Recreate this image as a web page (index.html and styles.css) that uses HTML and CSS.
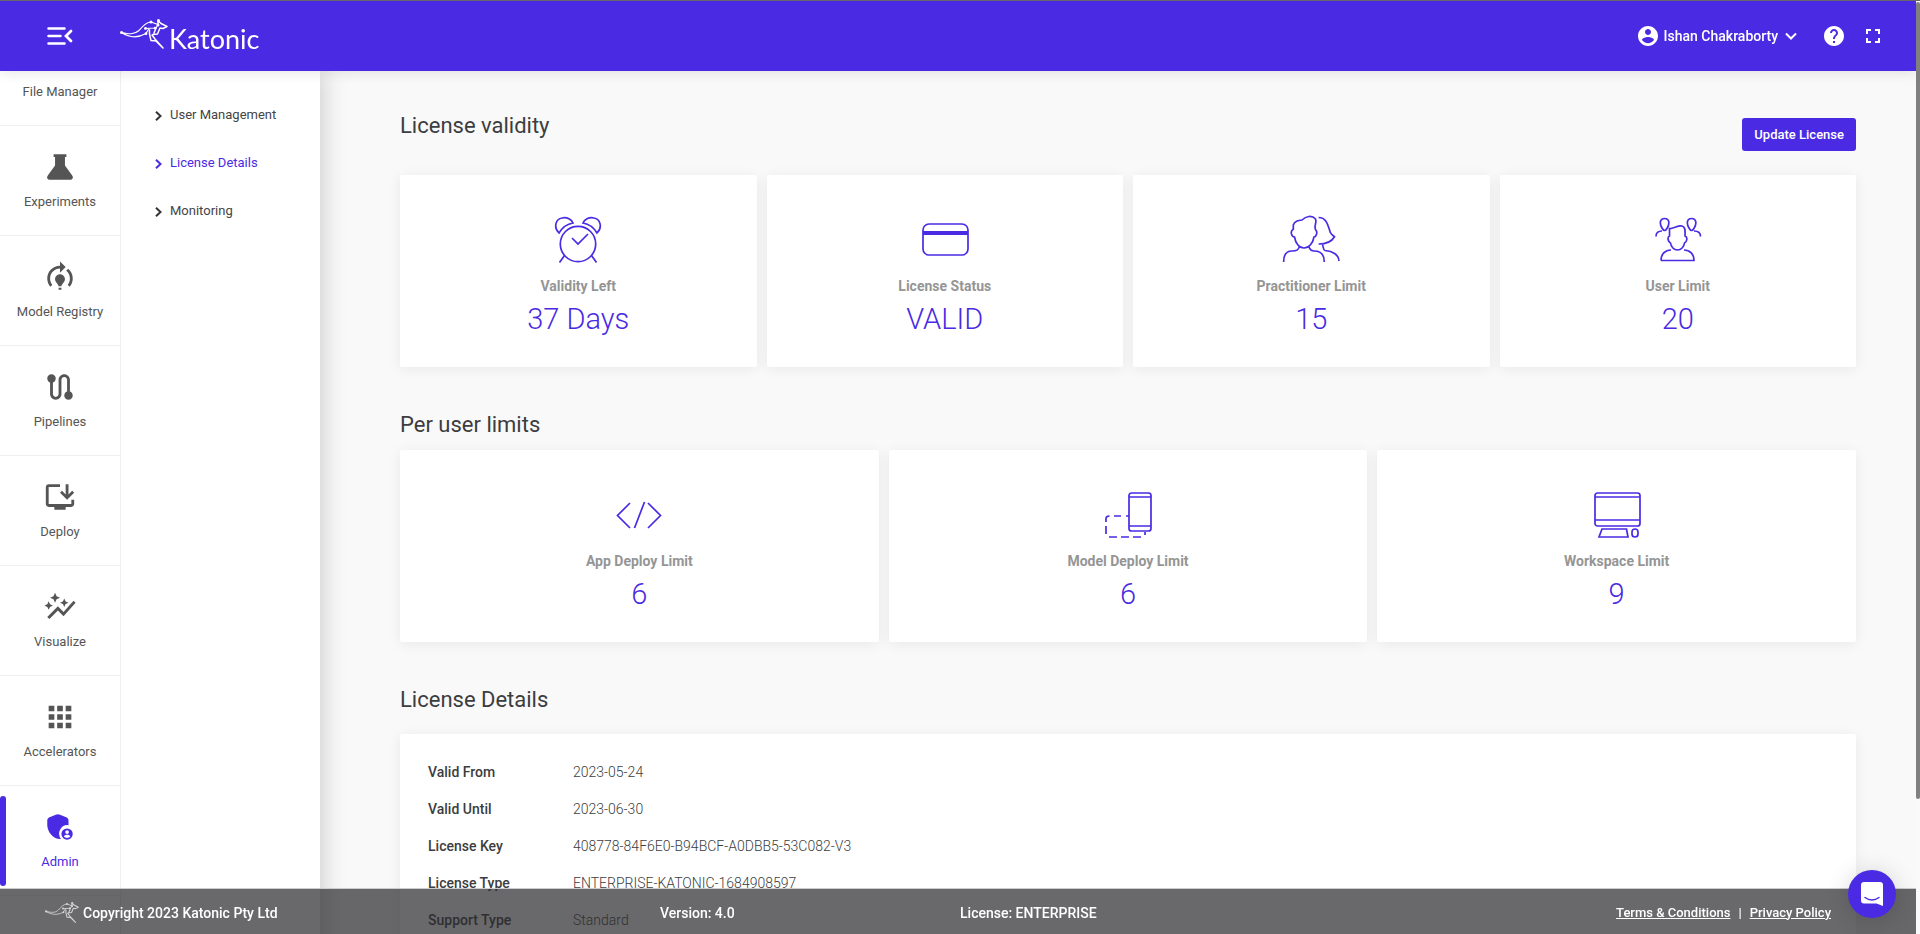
FILE: index.html
```html
<!DOCTYPE html>
<html lang="en">
<head>
<meta charset="utf-8">
<title>Katonic - License Details</title>
<link rel="stylesheet" href="styles.css">
</head>
<body>
<svg class="defs" aria-hidden="true">
  <symbol id="roo" viewBox="0 0 48 32">
    <g fill="none" stroke="currentColor" stroke-width="1.200" stroke-linecap="round" stroke-linejoin="round">
      <path d="M1.500 14.500C9 16 14 17 19 12.500C23 8 26 4.500 31 4L38 6.500M1.500 14.500C9 19.500 18 20 26 15.500L29 10.500M25 10.500L36 10L38 6.500"/>
      <path d="M38 2.500L41 5.500L47 8.500L43 10.500L40 10L37.500 16L33 16.500M38 2.500L38 6.500M29.500 12V16L31 22.500L36 23L43 30M32 17L35 21L43 30M36 10L34 15" stroke-width="1.500"/>
    </g>
    <g fill="currentColor"><circle cx="1.600" cy="14.500" r="1.600"/><circle cx="31" cy="4" r="1.500"/><circle cx="38.500" cy="2.500" r="1.500"/><circle cx="38" cy="7" r="1.500"/><circle cx="25.500" cy="10.500" r="1.400"/><circle cx="26" cy="15.700" r="1.400"/><circle cx="35" cy="10" r="1.300"/></g>
  </symbol>
</svg>

<header class="topbar">
  <button class="icon-btn menu-btn" aria-label="Collapse menu">
    <svg width="26" height="18" viewBox="0 0 26 18" fill="none" stroke="currentColor" stroke-width="2.500" stroke-linecap="round"><path d="M1.500 1.500h16M1.500 9h12M1.500 16.500h16"/><path d="M24 4l-5 5 5 5" stroke-width="2.800"/></svg>
  </button>
  <a class="brand" href="#"><svg class="brand-roo" width="48" height="32"><use href="#roo"/></svg><span class="brand-name">Katonic</span></a>
  <div class="topbar-right">
    <button class="icon-btn user-btn">
      <svg width="24" height="24" viewBox="0 0 24 24" fill="currentColor"><path d="M12 2C6.480 2 2 6.480 2 12s4.480 10 10 10 10-4.480 10-10S17.520 2 12 2zm0 3c1.660 0 3 1.340 3 3s-1.340 3-3 3-3-1.340-3-3 1.340-3 3-3zm0 14.200c-2.500 0-4.710-1.280-6-3.220.03-1.990 4-3.080 6-3.080 1.990 0 5.970 1.090 6 3.080-1.290 1.940-3.500 3.220-6 3.220z"/></svg>
      <span>Ishan Chakraborty</span>
      <svg width="12" height="8" viewBox="0 0 12 8" fill="none" stroke="currentColor" stroke-width="2"><path d="M1 1.500l5 5 5-5"/></svg>
    </button>
    <button class="icon-btn" aria-label="Help"><svg width="24" height="24" viewBox="0 0 24 24" fill="currentColor"><path d="M12 2C6.480 2 2 6.480 2 12s4.480 10 10 10 10-4.480 10-10S17.520 2 12 2zm1 17h-2v-2h2v2zm2.070-7.750l-.9.920C13.450 12.900 13 13.500 13 15h-2v-.5c0-1.100.45-2.100 1.170-2.830l1.240-1.260c.37-.36.59-.86.59-1.410 0-1.100-.9-2-2-2s-2 .9-2 2H8c0-2.210 1.790-4 4-4s4 1.790 4 4c0 .88-.36 1.680-.93 2.250z"/></svg></button>
    <button class="icon-btn" aria-label="Full screen"><svg width="24" height="24" viewBox="0 0 24 24" fill="currentColor"><path d="M7 14H5v5h5v-2H7v-3zm-2-4h2V7h3V5H5v5zm12 7h-3v2h5v-5h-2v3zM14 5v2h3v3h2V5h-5z"/></svg></button>
  </div>
</header>

<div class="shell">
  <nav class="sidebar" aria-label="Main">
    <a class="side-item side-item-cut" href="#">File Manager</a>
    <a class="side-item" href="#"><svg class="side-icon" viewBox="0 0 24 24"><path d="M7.500 3h9v2H15.500v6l5 6.800c1.300 1.800.3 3.200-1.500 3.200H5c-1.800 0-2.800-1.400-1.500-3.200l5-6.800V5H7.500z"/></svg>Experiments</a>
    <a class="side-item" href="#"><svg class="side-icon" viewBox="0 0 24 24"><path d="M15.500 13.500c0 2-2.500 3.500-2.500 5h-2c0-1.500-2.500-3-2.500-5 0-1.930 1.570-3.500 3.500-3.500s3.500 1.570 3.500 3.500zm-2.500 6h-2V21h2v-1.500zm6-6.500c0 1.680-.59 3.210-1.580 4.420l1.420 1.420C20.180 17.270 21 15.230 21 13c0-2.740-1.230-5.190-3.160-6.840l-1.420 1.420C17.990 8.860 19 10.820 19 13zm-3-8l-4-4v3c-4.970 0-9 4.030-9 9 0 2.230.82 4.270 2.160 5.840l1.420-1.420C5.590 16.210 5 14.680 5 13c0-3.860 3.140-7 7-7v3l4-4z"/></svg>Model Registry</a>
    <a class="side-item" href="#"><svg class="side-icon" viewBox="0 0 24 24"><path d="M19 15.180V7c0-2.210-1.790-4-4-4s-4 1.790-4 4v10c0 1.100-.9 2-2 2s-2-.9-2-2V8.820C8.160 8.400 9 7.300 9 6c0-1.660-1.340-3-3-3S3 4.340 3 6c0 1.300.84 2.400 2 2.820V17c0 2.210 1.790 4 4 4s4-1.790 4-4V7c0-1.100.9-2 2-2s2 .9 2 2v8.180c-1.160.41-2 1.510-2 2.820 0 1.660 1.340 3 3 3s3-1.340 3-3c0-1.300-.84-2.400-2-2.820z"/></svg>Pipelines</a>
    <a class="side-item" href="#"><svg class="side-icon" viewBox="0 0 24 24"><path d="M20 17H4V5h8V3H4c-1.110 0-2 .89-2 2v12c0 1.100.89 2 2 2h4v2h8v-2h4c1.100 0 2-.9 2-2v-3h-2v3z"/><path d="M17 14l5-5-1.410-1.410L18 10.170V3h-2v7.170l-2.590-2.580L12 9l5 5z"/></svg>Deploy</a>
    <a class="side-item" href="#"><svg class="side-icon" viewBox="0 0 24 24"><path d="M14.060 9.940L12 9l2.060-.94L15 6l.94 2.060L18 9l-2.060.94L15 12l-.94-2.060zM4 14l.94-2.060L7 11l-2.060-.94L4 8l-.94 2.060L1 11l2.060.94L4 14zm4.500-5l1.090-2.410L12 5.500 9.590 4.410 8.500 2 7.410 4.410 5 5.500l2.410 1.090L8.500 9zm-4 11.500l6-6.010 4 4L23 8.930l-1.410-1.410-7.090 7.970-4-4L3 19l1.500 1.500z"/></svg>Visualize</a>
    <a class="side-item" href="#"><svg class="side-icon" viewBox="0 0 24 24"><path d="M4 8h4V4H4v4zm6 12h4v-4h-4v4zm-6 0h4v-4H4v4zm0-6h4v-4H4v4zm6 0h4v-4h-4v4zm6-10v4h4V4h-4zm-6 4h4V4h-4v4zm6 6h4v-4h-4v4zm0 6h4v-4h-4v4z"/></svg>Accelerators</a>
    <a class="side-item side-item-active" href="#" aria-current="page"><svg class="side-icon" viewBox="0 0 24 24"><path d="M9 3.300Q10.500 2.700 12 3.300L16.800 5.300Q18 6 18 7.300V10.700A6 6 0 0 0 12.700 20.400C7 20.800 3 15 3 10.500V7.300Q3 6 4.200 5.300Z"/><path fill-rule="evenodd" d="M17 13a4 4 0 1 0 0 8 4 4 0 0 0 0-8zm0 1.300a1.300 1.300 0 1 1 0 2.600 1.300 1.300 0 0 1 0-2.600zm-2.300 4.300c.6-1.500 4-1.500 4.600 0-1 1.500-3.600 1.500-4.600 0z"/></svg>Admin</a>
  </nav>

  <nav class="submenu" aria-label="Admin">
    <a class="sub-item" href="#"><svg class="chev" viewBox="0 0 7 10"><path d="M1 .8L5.500 5 1 9.200"/></svg>User Management</a>
    <a class="sub-item sub-item-active" href="#"><svg class="chev" viewBox="0 0 7 10"><path d="M1 .8L5.500 5 1 9.200"/></svg>License Details</a>
    <a class="sub-item" href="#"><svg class="chev" viewBox="0 0 7 10"><path d="M1 .8L5.500 5 1 9.200"/></svg>Monitoring</a>
  </nav>

  <main class="content">
    <div class="title-row">
      <h2 class="section-title">License validity</h2>
      <button class="update-btn">Update License</button>
    </div>
    <section class="cards cards-four">
      <article class="card">
        <svg class="card-icon" viewBox="0 -1 58 48"><circle cx="29" cy="28" r="17.700"/><path d="M23 22l6 6 10-10M15.500 39.500L10.500 46.500M42.500 39.500L47.500 46.500M10 17C4 11 7 3 13 2 18 .5 23 4 24 7 18 8 13 12 10 17zM48 17C54 11 51 3 45 2 40 .5 35 4 34 7 40 8 45 12 48 17z"/></svg>
        <h3 class="card-label">Validity Left</h3><p class="card-value">37 Days</p>
      </article>
      <article class="card">
        <svg class="card-icon" viewBox="0 0 58 48"><rect x="7" y="9" width="45" height="31" rx="6"/><path d="M7 18h45" stroke-width="4"/></svg>
        <h3 class="card-label">License Status</h3><p class="card-value">VALID</p>
      </article>
      <article class="card">
        <svg class="card-icon" viewBox="0 0 58 48"><path d="M1.600 47C1.600 40 4 36 10 36 15 36 16 35 17.300 32M27 32C28 34 28 36 32 36 39 36 42.300 40 42.300 47M22 33C17 33 13.500 28 12.500 22 9 21.500 8 16 11.300 14.300V10C12.500 6 16 5.500 20 5 24 1 30 0 33.500 4 35 8 32 10 33.400 14.300 36 17 34.500 21.500 32 22 31 28 27 33 22 33zM36.600 2.500C45 2.500 46 11 48.400 17.700 50 20.500 51.500 20.500 52.500 21.700 50 26 45 29 36.600 29M40.500 29.500C41.500 32 41 35 43 35.500 51 36 57 40 57 46"/></svg>
        <h3 class="card-label">Practitioner Limit</h3><p class="card-value">15</p>
      </article>
      <article class="card">
        <svg class="card-icon" viewBox="0 -1 58 48"><path d="M12 44.500C12 38 16 34 22 34M35 34C41 34 45 38 45 44.500H12M28.500 34C25 34 22 31 21.500 27 19 26 18 21 20.500 20V12.500C24 13 29 9 33 10 37 11 36 16 36 20 39 21 38 26 35.500 27 35 31 32 34 28.500 34zM15.600 2.500C10.500 2.500 10.500 8 13 12Q15.600 17 18.200 12C20.700 8 20.700 2.500 15.600 2.500zM42.600 2.500C37.500 2.500 37.500 8 40 12Q42.600 17 45.200 12C47.700 8 47.700 2.500 42.600 2.500zM13 15C9 15 7 17 7 20.500M45 15C49 15 51.500 17 51.500 20.500"/></svg>
        <h3 class="card-label">User Limit</h3><p class="card-value">20</p>
      </article>
    </section>

    <h2 class="section-title section-limits">Per user limits</h2>
    <section class="cards cards-three">
      <article class="card">
        <svg class="card-icon" viewBox="0 -1 58 48"><path d="M20 12L7.500 24.500 20 37M38 12L50.500 24.500 38 37M34.500 11L24.500 37"/></svg>
        <h3 class="card-label">App Deploy Limit</h3><p class="card-value">6</p>
      </article>
      <article class="card">
        <svg class="card-icon" viewBox="0 0 58 48"><rect x="30" y="3" width="22" height="38" rx="2.500"/><path d="M30 7h22M30 36h22M30 26H27M22 26H15M10.500 26Q7 26 7 28.500V32M7 36V44M10 47H18M22 47H30M34 47H42M46 42V45"/></svg>
        <h3 class="card-label">Model Deploy Limit</h3><p class="card-value">6</p>
      </article>
      <article class="card">
        <svg class="card-icon" viewBox="0 0 58 48"><rect x="7" y="3" width="45" height="33" rx="2.500"/><path d="M7 7h45M7 30h45M14 39H38.500L40 47H11z"/><rect x="44" y="39" width="6" height="8" rx="3"/></svg>
        <h3 class="card-label">Workspace Limit</h3><p class="card-value">9</p>
      </article>
    </section>

    <h2 class="section-title section-details">License Details</h2>
    <section class="details">
      <table>
        <tbody>
          <tr><th scope="row">Valid From</th><td>2023-05-24</td></tr>
          <tr><th scope="row">Valid Until</th><td>2023-06-30</td></tr>
          <tr><th scope="row">License Key</th><td>408778-84F6E0-B94BCF-A0DBB5-53C082-V3</td></tr>
          <tr><th scope="row">License Type</th><td>ENTERPRISE-KATONIC-1684908597</td></tr>
          <tr><th scope="row">Support Type</th><td>Standard</td></tr>
        </tbody>
      </table>
    </section>
  </main>
</div>

<footer class="footer">
  <div class="foot-copy"><svg class="foot-roo" width="34" height="23"><use href="#roo"/></svg>Copyright 2023 Katonic Pty Ltd</div>
  <div>Version: 4.0</div>
  <div>License: ENTERPRISE</div>
  <div class="foot-links"><a href="#">Terms &amp; Conditions</a><span>|</span><a href="#">Privacy Policy</a></div>
</footer>

<button class="chat" aria-label="Open chat"><svg width="22" height="24" viewBox="0 0 22 24"><path fill="#fff" d="M3 0H19Q22 0 22 3V24L15.500 21.500H3Q0 21.500 0 18.500V3Q0 0 3 0z"/><path d="M4 15.500Q11 20.500 18 15.500" fill="none" stroke="#4a2be3" stroke-width="1.500" stroke-linecap="round"/></svg></button>
<div class="scroll-track"><div class="scroll-thumb"></div></div>
</body>
</html>
```
FILE: styles.css
```css
:root { --brand: #4a2be3; --ink: #3c3d3f; }
* { box-sizing: border-box; }
body { margin: 0; height: 100vh; overflow: hidden; background: #f9f9f9; color: var(--ink); font: 14px/18px Roboto, "Liberation Sans", sans-serif; }
h2, h3, p { margin: 0; }
a { color: inherit; text-decoration: none; }
button { font: inherit; cursor: pointer; border: 0; }
.defs { position: absolute; width: 0; height: 0; }

.topbar { position: fixed; top: 0; left: 0; right: 4px; height: 71px; z-index: 5; display: flex; align-items: center; padding: 0 31px 0 47px; background: var(--brand); border-top: 1px solid #666; color: #fff; box-shadow: 0 2px 12px rgba(0, 0, 0, .1); }
.icon-btn { display: flex; align-items: center; padding: 0; background: none; color: #fff; }
.brand { display: flex; align-items: flex-start; margin-left: 47px; padding-top: 1px; }
.brand-name { font: 27px/32px Lato, sans-serif; margin-top: 5px; margin-left: 1px; }
.topbar-right { display: flex; align-items: center; gap: 15px; margin-left: auto; }
.user-btn { gap: 4px; font-weight: 500; margin-right: 10px; }
.user-btn svg:last-child { margin-left: 3px; }

.shell { display: grid; grid-template-columns: 121px 199px 1fr; height: 100%; padding: 71px 4px 0 0; }
.sidebar { background: #fff; border-right: 1px solid #efefef; z-index: 2; }
.side-item { position: relative; display: flex; flex-direction: column; align-items: center; gap: 9px; height: 110px; padding-top: 24px; border-bottom: 1px solid #efefef; color: #555; font-size: 13px; }
.side-item-cut { height: 55px; padding-top: 12px; }
.side-icon { width: 34px; height: 34px; fill: #555; }
.side-item-active { color: var(--brand); }
.side-item-active .side-icon { fill: var(--brand); }
.side-item-active::before { content: ""; position: absolute; left: 0; top: 10px; width: 6px; height: 90px; border-radius: 3px; background: var(--brand); }

.submenu { background: #fff; padding: 20px 0 0 34px; z-index: 1; box-shadow: 4px 0 22px rgba(0, 0, 0, .17); }
.sub-item { display: flex; align-items: center; gap: 8px; height: 48px; font-size: 13px; color: #444; }
.sub-item-active { color: var(--brand); }
.chev { width: 7px; height: 10px; margin-top: 2px; fill: none; stroke: #333; stroke-width: 2; }
.sub-item-active .chev { stroke: var(--brand); }

.content { padding: 41px 60px 0 80px; min-width: 0; }
.title-row { display: flex; justify-content: space-between; align-items: flex-start; height: 63px; }
.section-title { font-size: 22px; line-height: 28px; font-weight: 400; }
.update-btn { margin-top: 6px; height: 33px; padding: 0 12px; border-radius: 3px; background: var(--brand); color: #fff; font-size: 13px; font-weight: 500; }
.cards { display: grid; gap: 10px; }
.cards-four { grid-template-columns: repeat(4, 1fr); }
.cards-three { grid-template-columns: repeat(3, 1fr); }
.card { display: flex; flex-direction: column; align-items: center; height: 192px; padding-top: 40px; border-radius: 2px; background: #fff; box-shadow: 0 2px 14px rgba(0, 0, 0, .07); }
.card-icon { width: 58px; height: 48px; fill: none; stroke: var(--brand); stroke-width: 1.700; overflow: visible; }
.card-label { margin-top: 14px; font-size: 14px; line-height: 18px; font-weight: 700; color: #959595; }
.card-value { margin-top: 6px; font-size: 29px; line-height: 36px; font-weight: 300; color: var(--brand); }
.section-limits { margin: 44px 0 11px; }
.section-details { margin: 44px 0 20px; }
.details { padding: 19px 28px; border-radius: 2px; background: #fff; box-shadow: 0 2px 14px rgba(0, 0, 0, .07); }
.details table { border-collapse: collapse; }
.details th, .details td { height: 37px; padding: 0; text-align: left; }
.details th { width: 145px; font-weight: 500; }
.details td { font-weight: 300; }

.footer { position: fixed; left: 0; right: 4px; bottom: 0; height: 46px; z-index: 6; display: grid; grid-template-columns: 615px 300px 1fr auto; align-items: center; padding: 2px 85px 0 45px; border-top: 1px solid #ccc; background: rgba(41, 41, 44, .7); color: #fff; font-weight: 500; }
.foot-copy { display: flex; align-items: center; gap: 4px; }
.foot-roo { opacity: .7; }
.foot-links { display: flex; gap: 8px; font-size: 13px; }
.foot-links a { text-decoration: underline; }
.chat { position: fixed; right: 24px; bottom: 16px; z-index: 7; width: 48px; height: 48px; display: flex; align-items: center; justify-content: center; padding: 0; border-radius: 50%; background: var(--brand); box-shadow: 0 2px 24px rgba(0, 0, 0, .16); }
.scroll-track { position: fixed; top: 0; right: 0; bottom: 0; width: 4px; z-index: 8; padding-top: 1px; background: #fafafa; border-top: 1px solid #666; }
.scroll-thumb { height: 797px; border-radius: 2px; background: #808080; }
```
